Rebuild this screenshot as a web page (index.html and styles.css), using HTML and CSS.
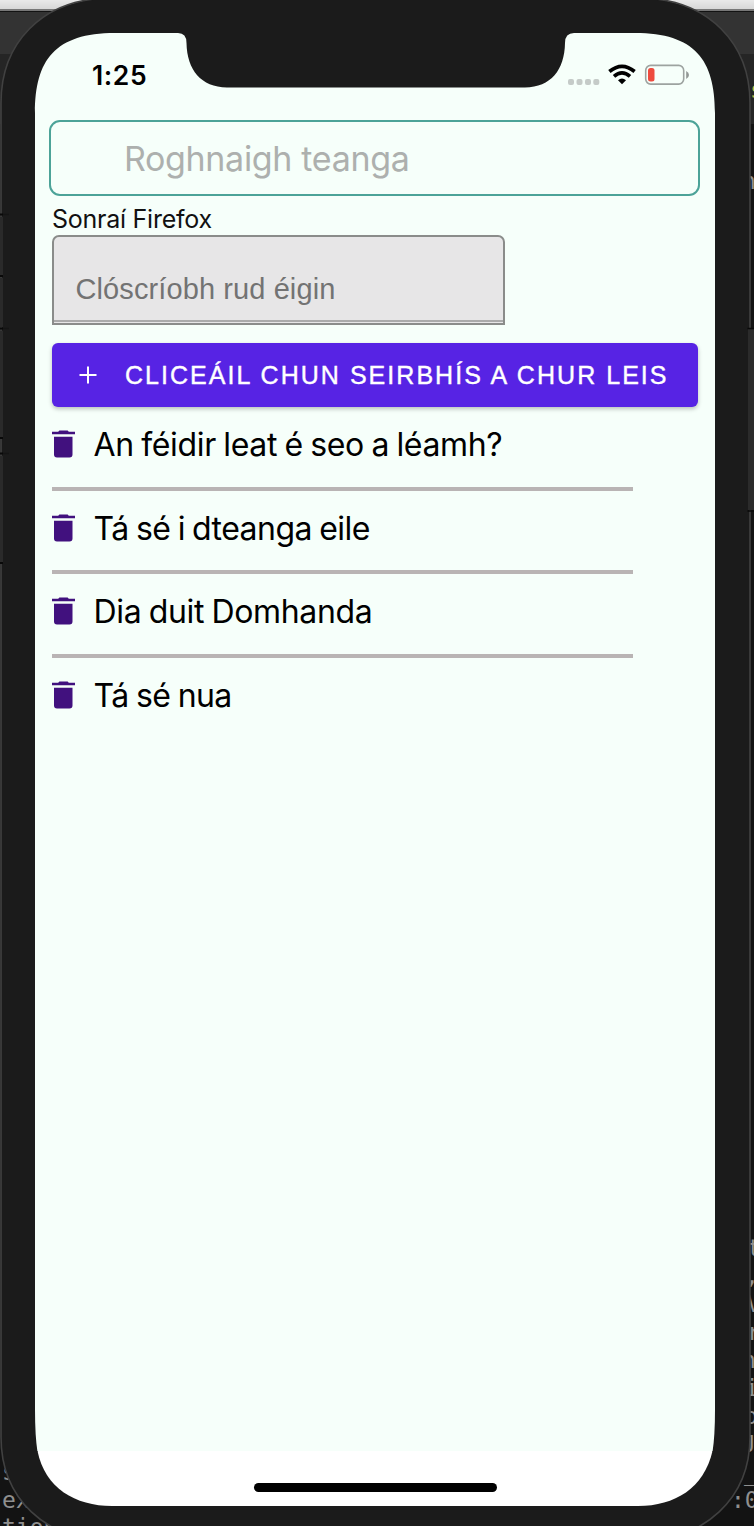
FILE: index.html
```html
<!DOCTYPE html>
<html lang="ga">
<head>
<meta charset="utf-8">
<title>Seirbhís</title>
<link rel="stylesheet" href="styles.css">
</head>
<body>
<div class="desktop">
  <svg class="backdrop" width="754" height="1526" viewBox="0 0 754 1526" aria-hidden="true">
    <defs>
      <linearGradient id="bar" x2="0" y2="1"><stop stop-color="#e9e9e9"/><stop offset="1" stop-color="#d5d5d5"/></linearGradient>
    </defs>
    <rect width="754" height="1526" fill="#131313"/>
    <rect y="12" width="754" height="42" fill="#333"/>
    <rect y="54" width="754" height="70" fill="#252525"/>
    <rect width="754" height="10" fill="url(#bar)"/>
    <rect y="9" width="754" height="2" fill="#777"/>
    <g class="code">
      <text x="750" y="98" fill="#b9ba45">s</text>
      <text x="742" y="189">n</text>
      <text x="747" y="1256">t</text>
      <text x="745" y="1284">,</text>
      <text x="747" y="1312">V</text>
      <text x="747" y="1340">r</text>
      <text x="742" y="1368">n</text>
      <text x="745" y="1396">i</text>
      <text x="744" y="1424">o</text>
      <text x="742" y="1452">J</text>
      <text x="744" y="1480">_</text>
      <text x="731" y="1508">:0</text>
      <text x="2" y="1480">s</text>
      <text x="2" y="1508">ex</text>
      <text x="2" y="1535">tion</text>
    </g>
  </svg>
  <svg class="frame" width="754" height="1526" viewBox="0 0 754 1526" aria-hidden="true">
    <path fill="#1b1b1b" stroke="#414141" stroke-width="1.6" d="M112-2C40-2 1 45 1 103V1437C1 1498 45 1541 112 1541H638C705 1541 750 1498 750 1437V103C750 45 710-2 638-2Z"/>
    <path d="M0 217H3V275H0ZM0 278H3V327H0ZM0 331H3V437H0ZM0 456H3V562H0Z" fill="#2a2a2a"/>
    <path d="M0 214.500H3M0 276H3M0 328.500H3M0 438H3M0 453.500H3M0 563H3" stroke="#090909" stroke-width="2"/>
    <path d="M3 214.500H9M3 328.500H9M3 453.500H9" stroke="#151515" stroke-width="1.500"/>
    <path fill="#2b2b2b" d="M748 329H754V510H748Z"/>
    <path stroke="#090909" stroke-width="1.500" d="M747.500 328.500H754M747.500 511H754"/>
    <path fill="#f6fffa" d="M115 33H178Q186.500 33 186.500 43C187 70 201 87 227 87.500H525C551 87 564.500 70 565 43Q565 33 574 33H635C695 33 715 60 715 113V1451H35V113C35 60 55 33 115 33Z"/>
    <path fill="#fff" d="M37.500 1451H712.500C704 1488 675 1506 638 1506H112C75 1506 45 1488 37.500 1451Z"/>
    <path fill="#1b1b1b" d="M35 1410Q35 1436 37.500 1452H35ZM715 1410Q715 1436 712.500 1452H715Z"/>
  </svg>

  <main class="screen">
    <header class="status">
      <span class="time">1:25</span>
      <svg class="signals" width="124" height="24" viewBox="0 0 124 24" aria-hidden="true">
        <g fill="#c5cbc8"><rect x="1" y="16" width="6" height="6" rx="2"/><rect x="9.500" y="16" width="6" height="6" rx="2"/><rect x="18" y="16" width="6" height="6" rx="2"/><rect x="26.300" y="16" width="6" height="6" rx="2"/></g>
        <g fill="none" stroke="#000" stroke-width="3.700"><path d="M42.400 8.500Q55 -1.900 67.600 8.500"/><path d="M47 13.300Q55 6.600 63 13.300"/></g>
        <path d="M51 17.200Q55 13.900 59 17.200L55 21.200Z"/>
        <rect x="78.700" y="2.400" width="38" height="18.700" rx="5" fill="none" stroke="#9da3a0" stroke-width="1.600"/>
        <rect x="81" y="5" width="6.500" height="13.500" rx="2.500" fill="#ee4b3e"/>
        <path d="M119.200 8V16Q122 14.500 122 12T119.200 8Z" fill="#929895"/>
      </svg>
    </header>

    <div class="picker">Roghnaigh teanga</div>
    <section class="form">
      <label class="label">Sonraí Firefox</label>
      <div class="field">Clóscríobh rud éigin</div>
      <button class="add">
        <svg width="18" height="18" viewBox="0 0 18 18"><path d="M9 .5V17.500M.5 9H17.500" stroke="#fff" stroke-width="2"/></svg>
        <span>CLICEÁIL CHUN SEIRBHÍS A CHUR LEIS</span>
      </button>
    </section>
    <svg class="defs" width="0" height="0"><symbol id="trash" viewBox="0 0 23 28"><path d="M0 1.800H6.200L7.400.5H15.600L16.800 1.800H23V4.300H0ZM2 6.700H20.500V24.500Q20.500 27.500 17.500 27.500H5Q2 27.500 2 24.500Z"/></symbol></svg>
    <ul class="list">
      <li><svg class="trash"><use href="#trash"/></svg><span>An féidir leat é seo a léamh?</span></li>
      <li><svg class="trash"><use href="#trash"/></svg><span class="tight">Tá sé i dteanga eile</span></li>
      <li><svg class="trash"><use href="#trash"/></svg><span>Dia duit Domhanda</span></li>
      <li><svg class="trash"><use href="#trash"/></svg><span class="tight">Tá sé nua</span></li>
    </ul>
    <div class="home"></div>
  </main>
</div>
</body>
</html>
```
FILE: styles.css
```css
* { box-sizing: border-box; }
body { margin: 0; background: #131313; }
.desktop { position: relative; width: 754px; height: 1526px; overflow: hidden; font-family: Inter, sans-serif; }
.backdrop, .frame { position: absolute; inset: 0; display: block; }
.code { font: 23px "DejaVu Sans Mono", monospace; fill: #8f8f8f; }
.screen { position: relative; width: 680px; height: 1473px; margin: 0 0 0 35px; top: 33px; display: flex; flex-direction: column; padding: 0 15px; }
.status { height: 87px; display: flex; align-items: flex-start; justify-content: space-between; padding: 30px 9px 0 42px; }
.time { font-size: 26.5px; line-height: 24px; font-weight: 600; letter-spacing: .6px; color: #000; }
.signals { display: block; }
.picker { height: 76px; width: 651px; flex: none; margin-left: -.6px; border: 2px solid #4ca398; border-radius: 11px; padding-left: 72.5px; line-height: 73px; font-size: 34px; color: #adb0ae; letter-spacing: -.32px; white-space: nowrap; }
.form { padding: 8px 2px 0; display: flex; flex-direction: column; }
.label { height: 31px; line-height: 30px; font-size: 25px; letter-spacing: -.25px; color: #111; white-space: nowrap; }
.field { width: 453px; height: 90px; border: 2px solid #8a8c8a; border-radius: 7px 7px 0 0; background: linear-gradient(#aaa, #aaa) 0 calc(100% - 1px) / 100% 2px no-repeat #e7e6e7; padding-left: 21.5px; font: 29px/104px "Liberation Sans", sans-serif; letter-spacing: .1px; color: #737373; white-space: nowrap; }
.add { margin: 18px 0 0; width: 646px; height: 64px; border: 0; border-radius: 6px; background: #5723e4; box-shadow: 0 2px 4px rgba(0,0,0,.25); color: #fff; display: flex; align-items: center; gap: 28px; padding: 0 0 0 27px; font: 25px/64px "Liberation Sans", sans-serif; letter-spacing: 2.04px; -webkit-text-stroke: .4px #fff; white-space: nowrap; }
.add svg { flex: none; }
.defs { position: absolute; }
.list { list-style: none; margin: 0; padding: 0 0 0 2px; width: 583px; }
.list li { height: 83.5px; display: flex; align-items: center; padding-bottom: 4px; border-bottom: 4px solid #b9b4b4; color: #000; font-size: 32px; letter-spacing: -.35px; word-spacing: -1.2px; white-space: nowrap; }
.list li:last-child { border-color: transparent; }
.list .tight { letter-spacing: -.55px; }
.trash { width: 23px; height: 28px; margin: 0 18.5px 1px 0; flex: none; fill: #41117e; }
.home { width: 243px; height: 9px; border-radius: 5px; background: #000; margin: auto auto 14.500px 204px; }
```
